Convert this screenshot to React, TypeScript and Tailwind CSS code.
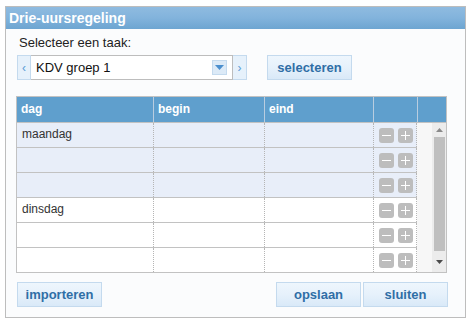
const font = { fontFamily: '"Liberation Sans", Arial, sans-serif' };

type Row = { dag: string; tint: boolean };

const rows: Row[] = [
  { dag: "maandag", tint: true },
  { dag: "", tint: true },
  { dag: "", tint: true },
  { dag: "dinsdag", tint: false },
  { dag: "", tint: false },
  { dag: "", tint: false },
];

function Btn({ label, className = "" }: { label: string; className?: string }) {
  return (
    <button
      className={`h-[25px] w-[85px] border border-[#c4daee] bg-gradient-to-b from-[#eef6fd] via-[#e6f1fb] to-[#d9e9f8] text-[13px] font-bold text-[#2f6ea6] ${className}`}
    >
      {label}
    </button>
  );
}

function MiniBtn({ kind }: { kind: "min" | "plus" }) {
  return (
    <div className="relative h-[15px] w-[15px] rounded-[3px] bg-[#bdbdbd]">
      <div className="absolute left-[3px] top-[7px] h-px w-[9px] bg-white" />
      {kind === "plus" && <div className="absolute left-[7px] top-[3px] h-[9px] w-px bg-white" />}
    </div>
  );
}

export default function App() {
  return (
    <div className="h-[328px] w-[470px] bg-white pl-[5px] pt-[6px]" style={font}>
      <div className="flex h-[312px] w-[461px] flex-col border border-[#bdbdbd] bg-[#fbfcfd]">
        <div className="h-[22px] bg-gradient-to-b from-[#8fbbe0] via-[#82b3dc] to-[#6da5d1] pl-[3px] text-[14px] font-bold leading-[22px] text-white">
          Drie-uursregeling
        </div>

        <div className="flex flex-1 flex-col px-[10px]">
          <div className="mt-[6px] pl-[3px] text-[13px] leading-[16px] text-[#222]">Selecteer een taak:</div>

          <div className="mt-[4px] flex h-[25px] items-stretch pl-[1px]">
            <div className="flex w-[14px] items-center justify-center border border-[#c4daee] bg-[#e6f1fb] text-[12px] text-[#5b9bd5]">
              ‹
            </div>
            <div className="flex w-[202px] items-center border border-l-0 border-[#bdbdbd] bg-white pl-[5px] pr-[5px]">
              <span className="flex-1 text-[13px] text-[#111]">KDV groep 1</span>
              <div className="flex h-[15px] w-[15px] items-center justify-center border border-[#c4daee] bg-[#dceaf7]">
                <svg width="9" height="5" viewBox="0 0 9 5">
                  <path d="M0 0h9L4.5 5z" fill="#4b8fce" />
                </svg>
              </div>
            </div>
            <div className="flex w-[14px] items-center justify-center border border-l-0 border-[#c4daee] bg-[#e6f1fb] text-[12px] text-[#5b9bd5]">
              ›
            </div>
            <Btn label="selecteren" className="ml-[20px]" />
          </div>

          <div className="mt-[16px] w-[431px] border border-[#c2c2c2]">
            <div className="grid h-[25px] grid-cols-[136px_111px_109px_44px_29px] bg-[#5f9fcd] text-[12px] font-bold leading-[24px] text-white">
              <div className="pl-[4px]">dag</div>
              <div className="border-l border-[#b9cde0] pl-[4px]">begin</div>
              <div className="border-l border-[#b9cde0] pl-[4px]">eind</div>
              <div className="border-l border-[#b9cde0]" />
              <div className="border-l border-[#b9cde0]" />
            </div>
            <div className="flex">
              <div className="flex flex-col">
                {rows.map((r, i) => (
                  <div
                    key={i}
                    className={`grid h-[25px] grid-cols-[136px_111px_109px_44px] border-t border-[#c2c2c2] text-[12px] text-[#333] ${r.tint ? "bg-[#e8eef9]" : "bg-white"}`}
                  >
                    <div className="pl-[5px] leading-[23px]">{r.dag}</div>
                    <div className="border-l border-dotted border-[#b5b5b5]" />
                    <div className="border-l border-dotted border-[#b5b5b5]" />
                    <div className="flex items-center gap-[4px] border-l border-r border-dotted border-[#b5b5b5] pl-[5px]">
                      <MiniBtn kind="min" />
                      <MiniBtn kind="plus" />
                    </div>
                  </div>
                ))}
              </div>
              <div className="flex w-[29px] justify-end border-t border-[#c2c2c2] bg-[#f7f7f7]">
                <div className="flex w-[14px] flex-col items-center bg-[#ececec]">
                  <svg className="mt-[5px]" width="7" height="4" viewBox="0 0 7 4">
                    <path d="M0 4h7L3.5 0z" fill="#8a8a8a" />
                  </svg>
                  <div className="mt-[5px] h-[114px] w-[11px] bg-[#bfbfbf]" />
                  <svg className="mt-[9px]" width="7" height="4" viewBox="0 0 7 4">
                    <path d="M0 0h7L3.5 4z" fill="#4a4a4a" />
                  </svg>
                </div>
              </div>
            </div>
          </div>

          <div className="mt-[9px] flex pl-[1px] pr-[7px]">
            <Btn label="importeren" />
            <div className="flex-1" />
            <Btn label="opslaan" />
            <Btn label="sluiten" className="ml-[2px]" />
          </div>
        </div>
      </div>
    </div>
  );
}
